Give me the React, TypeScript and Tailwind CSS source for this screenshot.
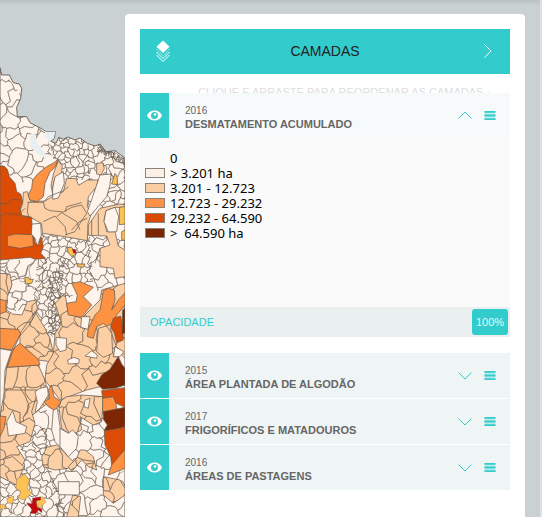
import React, { useState } from "react";

/* ---------- Map ---------- */

type Region = [fill: string, points: string];
type Point = [number, number];

const CREAM = "#fff4ec";
const PEACH = "#fdcfa5";
const ORANGE = "#fd9243";
const RUST = "#dc4c04";
const BROWN = "#7c2604";
const YELLOW = "#fcc254";
const CRIMSON = "#c4080c";

const LAND =
  "0,203 5,225 28,225 40,248 58,252 65,265 62,295 50,322 52,350 80,350 90,368 128,388 138,395 166,395 163,415 152,424 168,430 176,412 190,418 204,411 225,420 240,414 262,430 285,438 300,432 318,455 345,452 358,462 375,474 375,1551 0,1551";

const hash = (a: number, b: number, c: number) => {
  const s = Math.sin(a * 127.1 + b * 311.7 + c * 74.7) * 43758.5453;
  return s - Math.floor(s) - 0.5;
};

/** Keeps the part of a cell that is nearer to p than to q. */
function clipCell(cell: Point[], p: Point, q: Point): Point[] {
  const mx = (p[0] + q[0]) / 2;
  const my = (p[1] + q[1]) / 2;
  const side = (v: Point) => (v[0] - mx) * (q[0] - p[0]) + (v[1] - my) * (q[1] - p[1]);
  const out: Point[] = [];
  cell.forEach((a, i) => {
    const b = cell[(i + 1) % cell.length];
    const sa = side(a);
    const sb = side(b);
    if (sa <= 0) out.push(a);
    if (sa < 0 !== sb < 0) {
      const t = sa / (sa - sb);
      out.push([a[0] + (b[0] - a[0]) * t, a[1] + (b[1] - a[1]) * t]);
    }
  });
  return out;
}

/** Municipality borders: a Voronoi diagram with bent edges over a rectangle. */
function borders(x0: number, y0: number, x1: number, y1: number, size: number, seed: number) {
  const site = (i: number, j: number): Point => [
    x0 + (i + 0.5 + hash(i, j, seed) * 1.4) * size,
    y0 + (j + 0.5 + hash(j, i, seed + 40) * 1.4) * size,
  ];
  let d = "";
  for (let i = -1; i <= (x1 - x0) / size; i++) {
    for (let j = -1; j <= (y1 - y0) / size; j++) {
      const p = site(i, j);
      const r = size * 2;
      let cell: Point[] = [
        [p[0] - r, p[1] - r], [p[0] + r, p[1] - r], [p[0] + r, p[1] + r], [p[0] - r, p[1] + r],
      ];
      for (let di = -2; di <= 2; di++) {
        for (let dj = -2; dj <= 2; dj++) {
          if (di || dj) cell = clipCell(cell, p, site(i + di, j + dj));
        }
      }
      cell.forEach((a, k) => {
        const b = cell[(k + 1) % cell.length];
        const [s, e] = a[0] < b[0] ? [a, b] : [b, a];
        const length = Math.hypot(e[0] - s[0], e[1] - s[1]);
        const bend = (t: number, n: number) => {
          const w = hash(Math.round((s[0] + e[0]) / 2), Math.round((s[1] + e[1]) / 2), n) * length * 0.5;
          return `${(s[0] + (e[0] - s[0]) * t - ((e[1] - s[1]) / (length || 1)) * w).toFixed(1)},${(s[1] + (e[1] - s[1]) * t + ((e[0] - s[0]) / (length || 1)) * w).toFixed(1)}`;
        };
        d += `M${s[0].toFixed(1)},${s[1].toFixed(1)}L${bend(0.3, 1)} ${bend(0.7, 2)} ${e[0].toFixed(1)},${e[1].toFixed(1)}`;
      });
    }
  }
  return d;
}

const MESHES = [
  { id: "northwest", area: "0,200 140,390 160,500 90,560 20,520 0,490", d: borders(0, 200, 160, 560, 42, 1) },
  { id: "coast", area: "140,395 265,400 270,540 190,540 160,475", d: borders(140, 395, 275, 545, 17, 2) },
  { id: "northeast", area: "262,400 375,440 375,630 320,640 265,640", d: borders(260, 400, 375, 650, 27, 3) },
  { id: "shore", area: "295,432 375,474 375,496 330,470 290,455", d: borders(290, 430, 375, 500, 8, 8) },
  { id: "middle", area: "125,700 270,710 280,850 195,900 180,1010 150,1010 100,920 110,800", d: borders(100, 700, 280, 1010, 22, 4) },
  { id: "core", area: "142,835 192,780 185,900 178,1010 145,1000", d: borders(140, 780, 195, 1010, 15, 12) },
  { id: "west", area: "0,780 140,780 145,850 100,920 20,940 0,850", d: borders(0, 780, 150, 940, 38, 5) },
  { id: "east", area: "265,700 375,700 375,880 270,870", d: borders(265, 700, 375, 880, 36, 9) },
  { id: "south", area: "110,1230 330,1230 375,1420 375,1551 170,1551 150,1400", d: borders(110, 1230, 375, 1551, 40, 6) },
  { id: "southwest", area: "20,1220 140,1290 150,1400 205,1551 0,1551 0,1420 70,1370", d: borders(0, 1220, 205, 1551, 23, 7) },
];

const PEACH_REGIONS: string[] = [
  "175,482 187,498 184,523 166,532 158,560 160,588 135,603 92,605 82,575 70,577 68,610 56,645 88,650 124,670 128,700 195,710 262,722 264,670 275,640 262,620 265,590 290,560 294,540 262,540 236,556 228,536 200,535 190,575 160,590 153,558 160,522",
  "290,490 308,488 313,505 303,525 290,522",
  "265,675 300,625 358,612 375,614 375,622 345,622 318,632 312,660 320,695 345,695 355,738 375,750 375,830 345,835 340,805 300,800 300,745 330,735 320,708 265,706",
  "0,820 30,822 36,855 22,890 20,930 38,942 66,945 82,905 108,900 112,925 90,970 62,1000 0,985",
  "60,1000 105,935 135,985 150,1015 160,1060 150,1085 115,1080 60,1030",
  "165,910 195,880 205,940 245,955 300,900 305,870 375,850 375,1075 345,1045 340,1070 355,1070 300,1160 260,1170 180,1200 135,1140 140,1095 160,1060 165,1000 185,970",
  "20,1102 115,1095 135,1140 150,1210 135,1215 80,1260 30,1240 0,1280 0,1190 15,1150",
  "10,1170 115,1170 95,1235 105,1270 90,1325 50,1340 75,1380 45,1445 0,1405 0,1240",
  "175,1208 200,1190 245,1185 310,1190 305,1265 280,1275 240,1250 245,1290 215,1305 185,1285",
  "125,1372 140,1342 170,1335 205,1370 220,1385 205,1405 165,1410 130,1400",
  "240,1350 255,1350 280,1370 290,1410 265,1400 245,1380 215,1415 205,1400 230,1375",
  "310,1430 360,1440 375,1465 375,1485 340,1510 310,1485",
  "218,1485 242,1490 235,1551 200,1551",
  "0,1380 38,1370 72,1400 50,1455 0,1430",
];

const REGIONS: Region[] = [
  [RUST, "0,498 12,498 22,508 28,530 45,550 50,575 62,582 68,605 60,627 66,648 95,652 96,682 103,700 105,728 118,735 117,718 124,712 130,740 122,760 137,775 105,778 90,772 0,780"],
  [ORANGE, "22,708 45,702 98,704 100,738 60,745 22,738"],
  [ORANGE, "162,488 174,478 165,502 150,515 135,550 130,590 112,605 90,600 84,585 95,565 98,540 115,520 140,500"],
  [CREAM, "165,530 190,515 193,550 175,594 158,598 158,565"],
  [CREAM, "300,525 333,522 330,555 320,590 270,648 262,635 278,590"],
  [CREAM, "318,632 345,622 356,650 350,695 325,696 312,665"],
  [CREAM, "96,672 122,670 124,705 112,738 105,715 94,702"],
  [ORANGE, "215,850 240,845 280,862 250,890 275,915 245,952 205,945 200,910 228,905 232,885"],
  [ORANGE, "310,872 325,865 343,870 345,900 335,930 355,900 375,878 375,915 350,945 340,970 320,978 310,970 290,980 280,1015 262,1010 265,985 285,945 300,930"],
  [PEACH, "295,985 320,978 335,1000 338,1060 310,1072 290,1055"],
  [RUST, "340,955 362,948 368,980 370,1020 350,1028 343,1000 332,980"],
  [BROWN, "368,930 375,925 375,1000 366,1000"],
  [ORANGE, "0,898 18,902 18,935 0,942"],
  [ORANGE, "0,985 55,988 62,1002 45,1032 35,1050 0,1045"],
  [ORANGE, "60,1030 115,1078 120,1095 20,1102 35,1050"],
  [CREAM, "0,1046 35,1052 15,1110 12,1180 0,1250"],
  [CREAM, "245,950 270,950 264,988 242,982"],
  [CREAM, "168,1012 200,1015 198,1050 180,1055 168,1035"],
  [CREAM, "255,1068 275,1052 292,1065 290,1075 275,1072"],
  [CREAM, "340,1070 345,1040 372,1055 360,1070"],
  [CREAM, "203,1080 222,1072 238,1078 236,1090 205,1092"],
  [BROWN, "355,1070 365,1092 375,1105 375,1155 345,1165 308,1168 290,1150 305,1125 330,1108"],
  [RUST, "305,1172 375,1163 375,1222 345,1208 340,1190 308,1195"],
  [ORANGE, "308,1195 340,1190 348,1210 350,1230 308,1235"],
  [BROWN, "310,1235 375,1222 375,1280 345,1290 312,1292 322,1275 310,1258"],
  [RUST, "313,1293 375,1282 375,1350 335,1395 332,1370 315,1335"],
  [ORANGE, "335,1395 375,1348 375,1405 325,1425"],
  [ORANGE, "145,1170 155,1155 162,1190 183,1205 165,1232 145,1220 132,1205 150,1195"],
  [ORANGE, "0,1248 18,1250 12,1285 0,1310"],
  [CREAM, "105,1175 120,1165 142,1160 145,1185 120,1225 105,1238 112,1205"],
  [CREAM, "20,1265 38,1232 48,1265 80,1280 75,1300 25,1308"],
  [CREAM, "160,1230 172,1225 180,1280 185,1345 165,1325 155,1290"],
  [CREAM, "180,1285 205,1300 218,1290 235,1310 230,1345 205,1370 180,1340"],
  [CREAM, "175,1445 238,1445 238,1485 175,1484"],
  [CREAM, "255,1200 270,1195 265,1225 252,1220"],
  [YELLOW, "345,520 352,532 352,554 335,552"],
  [YELLOW, "358,622 375,620 375,672 358,674"],
  [YELLOW, "365,695 375,690 375,722 365,718"],
  [YELLOW, "203,742 215,742 228,762 215,770 203,755"],
  [YELLOW, "232,792 255,792 250,802 232,800"],
  [YELLOW, "75,832 85,832 88,838 100,838 95,850 76,852"],
];

const SMALL_REGIONS: Region[] = [
  [YELLOW, "50,1438 75,1422 88,1440 82,1465 95,1480 72,1500 55,1495 62,1475 48,1465"],
  [YELLOW, "20,1495 42,1488 38,1510 22,1510"],
  [YELLOW, "0,1515 12,1512 18,1525 0,1528"],
  [YELLOW, "110,1498 128,1490 138,1505 120,1525 108,1515"],
  [CRIMSON, "98,1495 122,1490 122,1500 108,1502 112,1522 125,1526 126,1538 114,1530 108,1541 90,1540 97,1530 80,1508 96,1512"],
  [CRIMSON, "217,748 225,748 230,758 221,760"],
];

const RIVERS = [
  "92,400 104,398 112,428 138,462 138,475 122,468 90,440",
  "136,391 167,391 162,415 150,424 132,410",
];

const INNER_BORDERS =
  "M82,607L130,607 135,625 150,632 190,636 215,622 245,615 260,640 240,670 225,695 195,705M130,607L145,590 190,572 205,560M195,636L200,620 245,608M85,607L82,635 88,655M130,665L165,648 195,680 200,705M170,650L185,638 230,665 240,690M75,625L60,640M215,690L238,665 262,655M295,640L295,705M275,660L275,705M300,745L285,790M0,610L25,612 35,598 60,600M0,650L20,640 60,645M110,935L88,975 58,1010 38,1055 22,1100";

const PEACH_BORDERS = borders(0, 790, 375, 1551, 54, 11);

function DeforestationMap() {
  return (
    <svg viewBox="0 0 375 1551" className="block h-[517px] w-[125px] shrink-0" role="img" aria-label="Mapa">
      <defs>
        <clipPath id="land"><polygon points={LAND} /></clipPath>
        <clipPath id="peach">
          {PEACH_REGIONS.slice(3).map((p) => <polygon key={p} points={p} />)}
        </clipPath>
        {MESHES.map((m) => (
          <clipPath key={m.id} id={m.id}><polygon points={m.area} /></clipPath>
        ))}
      </defs>
      <polygon points={LAND} fill={CREAM} stroke="#6e6861" strokeWidth="3" />
      <g clipPath="url(#land)" stroke="#665a50" strokeWidth="2.2" strokeLinejoin="round">
        {MESHES.map((m) => (
          <path key={m.id} d={m.d} fill="none" strokeWidth="1.4" clipPath={`url(#${m.id})`} />
        ))}
        {PEACH_REGIONS.map((p) => <polygon key={p} points={p} fill={PEACH} />)}
        <path d={PEACH_BORDERS} fill="none" strokeWidth="1.4" clipPath="url(#peach)" />
        {REGIONS.map(([fill, p]) => <polygon key={p} points={p} fill={fill} />)}
        <path d={INNER_BORDERS} fill="none" />
        {SMALL_REGIONS.map(([fill, p]) => <polygon key={p} points={p} fill={fill} strokeWidth="1" />)}
        {RIVERS.map((p) => <polygon key={p} points={p} fill="#e9eff0" stroke="none" />)}
      </g>
    </svg>
  );
}

/* ---------- Icons ---------- */

function LayersIcon() {
  return (
    <svg width="14" height="22" viewBox="0 0 14 22" fill="none" stroke="#fff" strokeWidth="1" aria-hidden="true">
      <path d="M7 0.500L13.500 6.800 7 13 .5 6.800Z" fill="#fff" stroke="none" />
      <path d="M.5 9L7 15.500 13.500 9M.5 12L7 18.500 13.500 12M.5 15L7 21.500 13.500 15" />
      <path d="M0 8.300L7 15.300 14 8.300" stroke="#33cccc" />
    </svg>
  );
}

function EyeIcon() {
  return (
    <svg width="15" height="11" viewBox="0 0 15 11" aria-hidden="true">
      <path d="M0 5.500C2.500-1.300 12.500-1.300 15 5.500 12.500 12.300 2.500 12.300 0 5.500Z" fill="#fff" />
      <circle cx="7.500" cy="5.500" r="3.500" fill="#33cccc" />
      <circle cx="8" cy="4.500" r="1.200" fill="#fff" />
    </svg>
  );
}

function Chevron({ up = false }: { up?: boolean }) {
  return (
    <svg width="14" height="8" viewBox="0 0 14 8" fill="none" stroke="#33cccc" strokeWidth="1" aria-hidden="true">
      <path d={up ? "M.5 7.500L7 1 13.500 7.500" : "M.5 .5L7 7 13.500 .5"} />
    </svg>
  );
}

function HandleIcon() {
  return (
    <svg width="12" height="9" viewBox="0 0 12 9" aria-hidden="true">
      <path d="M.5 0h11v9H.5z" fill="#33cccc" opacity=".25" />
      <path d="M.5 0h11v1.800H.5zM.5 3.600h11v1.800H.5zM.5 7.200h11V9H.5z" fill="#33cccc" />
    </svg>
  );
}

/* ---------- Panel ---------- */

function LayerHeader({ year, title, open = false }: { year: string; title: string; open?: boolean }) {
  const [visible, setVisible] = useState(true);
  return (
    <div className={`flex h-[45px] ${open ? "bg-[#f6fafb]" : "bg-[#eff5f5]"}`}>
      <button
        type="button"
        aria-label={`Exibir ${title}`}
        aria-pressed={visible}
        onClick={() => setVisible(!visible)}
        className="flex w-[29px] shrink-0 items-center justify-center bg-[#33cccc] pb-px"
      >
        <EyeIcon />
      </button>
      <div className="min-w-0 flex-1 pt-[11px] pl-4 text-[#666]">
        <p className="text-[10px] leading-[13px]">{year}</p>
        <h2 className="text-[11px] leading-[14px] font-bold whitespace-nowrap">{title}</h2>
      </div>
      <div className="flex items-center gap-3 pr-[14px]">
        <button type="button" className={open ? "pb-px" : "pt-px"} aria-label={open ? "Recolher" : "Expandir"} aria-expanded={open}>
          <Chevron up={open} />
        </button>
        <button type="button" aria-label="Reordenar"><HandleIcon /></button>
      </div>
    </div>
  );
}

const LEGEND = [
  { label: "0", swatch: "invisible" },
  { label: "> 3.201 ha", swatch: "bg-[#fbf0e7]" },
  { label: "3.201 - 12.723", swatch: "bg-[#facda1]" },
  { label: "12.723 - 29.232", swatch: "bg-[#fa9146]" },
  { label: "29.232 - 64.590", swatch: "bg-[#d94b04]" },
  { label: ">  64.590 ha", swatch: "bg-[#7b2504]" },
];

const CLOSED_LAYERS = [
  { year: "2015", title: "ÁREA PLANTADA DE ALGODÃO" },
  { year: "2017", title: "FRIGORÍFICOS E MATADOUROS" },
  { year: "2016", title: "ÁREAS DE PASTAGENS" },
];

export default function App() {
  return (
    <div className="flex min-h-screen items-stretch border-r-2 border-[#dce2e4] bg-[#c9d1d3] bg-[linear-gradient(#b9c1c3,#c9d1d3_6px)] font-['Liberation_Sans',Arial,sans-serif]">
      <DeforestationMap />
      <main className="mt-[14px] mr-[15px] min-w-0 flex-1 rounded-t bg-white p-[15px] pb-0">
        <header className="grid h-[45px] grid-cols-[45px_1fr_45px] items-center bg-[#33cccc] pb-px">
          <span className="flex justify-center"><LayersIcon /></span>
          <h1 className="text-center text-[14px] leading-5 text-[#222]">CAMADAS</h1>
          <button type="button" aria-label="Fechar camadas" className="flex justify-center">
            <svg width="8" height="14" viewBox="0 0 8 14" fill="none" stroke="#fff" strokeWidth="1" aria-hidden="true">
              <path d="M.5 .5L7 7 .5 13.500" />
            </svg>
          </button>
        </header>

        <p className="h-[19px] overflow-hidden pt-3 pr-[18px] text-right text-[11px] leading-[13px] whitespace-nowrap text-[#ddd]">
          CLIQUE E ARRASTE PARA REORDENAR AS CAMADAS ↓
        </p>

        <section>
          <LayerHeader year="2016" title="DESMATAMENTO ACUMULADO" open />
          <div className="h-[169px] bg-[#fafafa] px-[5px] pt-[13px]">
            <ul>
              {LEGEND.map((item) => (
                <li key={item.label} className="flex h-[15px] items-start gap-[5px]">
                  <span className={`mt-[2px] h-[10px] w-5 border border-[#8b8177] ${item.swatch}`} />
                  <span className="font-['Noto_Sans',sans-serif] text-[13px] leading-[15px] whitespace-pre text-black">{item.label}</span>
                </li>
              ))}
            </ul>
          </div>
          <div className="flex h-[30px] items-center justify-between bg-[#eaf0f0] pr-[2px] pl-[10px] text-[11px]">
            <label htmlFor="opacity" className="text-[#33cccc]">OPACIDADE</label>
            <input
              id="opacity"
              defaultValue="100%"
              className="h-[26px] w-9 rounded-[3px] bg-[#33cccc] text-center text-[11px] text-[#e6fafa]"
            />
          </div>
        </section>

        <div className="mt-4 flex flex-col gap-px">
          {CLOSED_LAYERS.map((layer) => (
            <LayerHeader key={layer.title} {...layer} />
          ))}
        </div>
      </main>
    </div>
  );
}
